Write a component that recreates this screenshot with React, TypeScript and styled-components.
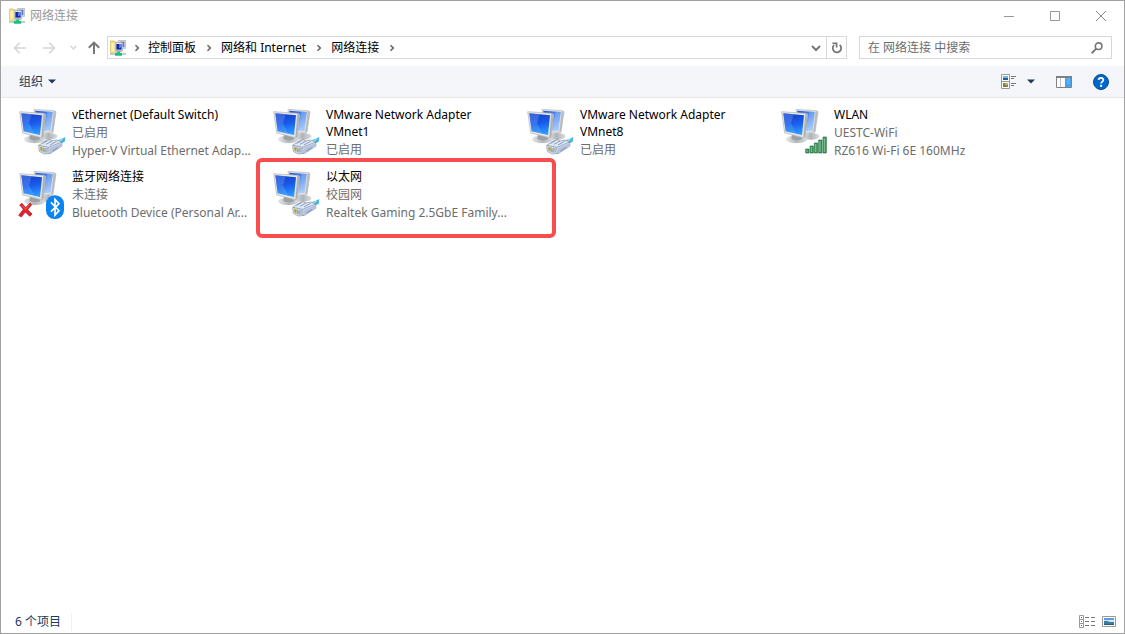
import React from "react";
import styled, { createGlobalStyle } from "styled-components";

const GlobalStyle = createGlobalStyle`
  * { box-sizing: border-box; }
  body {
    margin: 0;
    background: #fff;
    font-family: "Noto Sans", "Noto Sans CJK SC", sans-serif;
    font-size: 12px;
    line-height: 18px;
    color: #000;
  }
  button, input { font: inherit; color: inherit; }
  svg { display: block; flex: none; }
`;

const Window = styled.div`
  display: flex;
  flex-direction: column;
  min-height: 100vh;
  border: 1px solid #a0a0a0;
  background: #fff;
`;

const TitleBar = styled.header`
  display: flex;
  align-items: center;
  height: 30px;
  padding-left: 8px;
`;

const Title = styled.h1`
  flex: 1;
  margin: 0;
  padding-left: 5px;
  font-size: 12px;
  font-weight: 400;
  color: #999;
`;

const PlainButton = styled.button`
  display: flex;
  align-items: center;
  justify-content: center;
  padding: 0;
  border: 0;
  background: transparent;
`;

const CaptionButton = styled(PlainButton)`
  width: 46px;
  height: 30px;
`;

const NavBar = styled.nav`
  display: flex;
  align-items: center;
  height: 35px;
  padding: 0 12px 2px 7px;
`;

const NavButton = styled(PlainButton)<{ $width: number }>`
  width: ${(p) => p.$width}px;
  height: 24px;
`;

const AddressBar = styled.div`
  display: flex;
  flex: 1;
  align-items: center;
  height: 23px;
  padding-left: 2px;
  border: 1px solid #d9d9d9;
`;

const Crumbs = styled.ol`
  display: flex;
  flex: 1;
  align-items: center;
  margin: 0;
  padding: 0;
  list-style: none;
`;

const Crumb = styled.li`
  display: flex;
  align-items: center;
`;

const CrumbSeparator = styled.span<{ $first?: boolean }>`
  display: flex;
  justify-content: center;
  width: ${(p) => (p.$first ? 22 : 25)}px;
`;

const RefreshButton = styled(PlainButton)`
  width: 20px;
  height: 21px;
  border-left: 1px solid #d9d9d9;
`;

const SearchBox = styled.label`
  display: flex;
  align-items: center;
  width: 253px;
  height: 23px;
  margin-left: 12px;
  padding: 0 8px;
  border: 1px solid #d9d9d9;
`;

const SearchInput = styled.input`
  flex: 1;
  min-width: 0;
  padding: 0;
  border: 0;
  outline: 0;
  background: transparent;
  &::placeholder { color: #6d6d6d; opacity: 1; }
`;

const Toolbar = styled.div`
  display: flex;
  align-items: center;
  height: 32px;
  padding: 0 15px 0 18px;
  border-bottom: 1px solid #e5e7e9;
  background: #f4f6f9;
  color: #1e395b;
`;

const ToolButton = styled(PlainButton)`
  gap: 5px;
  height: 24px;
`;

const ToolGroup = styled.div`
  display: flex;
  align-items: center;
  gap: 21px;
  margin-left: auto;
`;

const ViewButton = styled(ToolButton)`
  gap: 10px;
`;

const ConnectionList = styled.ul`
  display: grid;
  flex: 1;
  grid-template-columns: repeat(auto-fill, 254px);
  grid-auto-rows: 62px;
  align-content: start;
  margin: 0;
  padding: 6px 0 0 15px;
  list-style: none;
`;

const ConnectionItem = styled.li`
  position: relative;
`;

const ConnectionButton = styled(PlainButton)`
  align-items: flex-start;
  justify-content: flex-start;
  gap: 4px;
  width: 100%;
  text-align: left;
`;

const ConnectionText = styled.span`
  display: flex;
  flex: 1;
  flex-direction: column;
  min-width: 0;
  padding: 2px 8px 0 0;
`;

const ConnectionName = styled.span`
  line-height: 17px;
`;

const ConnectionDetail = styled.span`
  overflow: hidden;
  line-height: 18px;
  color: #6d6d6d;
  text-overflow: ellipsis;
  white-space: nowrap;
`;

const ConnectionDetails = styled.span`
  display: flex;
  flex-direction: column;
  padding-top: 1px;
`;

const Highlight = styled.span`
  position: absolute;
  top: -8px;
  left: -14px;
  width: 300px;
  height: 80px;
  border: 4px solid #f94c4c;
  border-radius: 6px;
  pointer-events: none;
`;

const StatusBar = styled.footer`
  display: flex;
  align-items: center;
  justify-content: space-between;
  height: 23px;
  padding: 0 8px 0 14px;
  color: #1e395b;
`;

const ItemCount = styled.span`
  padding-right: 10px;
  border-right: 1px solid #f0f0f0;
`;

const StatusViews = styled.div`
  display: flex;
  gap: 7px;
`;

const FolderNetworkIcon = () => (
  <svg width="16" height="16" viewBox="0 0 48 48" aria-hidden="true">
    <path d="M1 3h12l3 3h8v31H1z" fill="#f2dc84" stroke="#d0b65e" strokeWidth="2" />
    <path d="M4 9h10v26H4z" fill="#fdf0aa" />
    <path d="M26 1h21v24H26z" fill="#d7dade" stroke="#a4abb1" strokeWidth="2" />
    <path d="M31 5h12v16H31z" fill="#5a76cf" />
    <path d="M16 8h22v24H16z" fill="#e8eaec" stroke="#9ba2a8" strokeWidth="2" />
    <path d="M19 12h16v17H19z" fill="#1527b4" />
    <path d="M28 12h7v10l-8 3z" fill="#6288ee" />
    <path d="M19 32h16v4H19z" fill="#aab0b5" />
    <path d="M0 39h48v6H0z" fill="#c3cccb" />
    <path d="M22 35h8v4h6v8H15v-8h7z" fill="#0fc57a" />
  </svg>
);

const Chevron = () => (
  <svg width="6" height="8" viewBox="0 0 6 8" aria-hidden="true">
    <path d="M1.5 1.2 4.3 4 1.5 6.8" fill="none" stroke="#666" strokeWidth="1.6" />
  </svg>
);

const ArrowIcon = ({ rotate, color }: { rotate: number; color: string }) => (
  <svg width="14" height="14" viewBox="0 0 14 14" aria-hidden="true">
    <path
      d="M13 7H1.8M6.8 1.8 1.6 7l5.2 5.2"
      transform={`rotate(${rotate} 7 7)`}
      fill="none"
      stroke={color}
      strokeWidth={rotate === 90 ? 2 : 1.6}
    />
  </svg>
);

const DownChevron = ({ size, color }: { size: number; color: string }) => (
  <svg width={size} height={size} viewBox="0 0 10 10" aria-hidden="true">
    <path d="m1 3 4 4 4-4" fill="none" stroke={color} strokeWidth="2" />
  </svg>
);

const DropArrow = () => (
  <svg width="8" height="5" viewBox="0 0 8 5" aria-hidden="true">
    <path d="M0 .5h8L4 4.5z" fill="#1e395b" />
  </svg>
);

const RefreshIcon = () => (
  <svg width="12" height="12" viewBox="0 0 12 12" aria-hidden="true">
    <path d="M3 3.2A4.2 4.2 0 1 0 8.6 2.9" fill="none" stroke="#777" strokeWidth="1.8" />
    <path d="M1.4 1.4h4.2v4.2" fill="none" stroke="#777" strokeWidth="1.7" />
  </svg>
);

const SearchIcon = () => (
  <svg width="12" height="12" viewBox="0 0 12 12" aria-hidden="true">
    <circle cx="7.6" cy="4.2" r="3.3" fill="none" stroke="#777" strokeWidth="1.6" />
    <path d="M5.2 6.6.6 11.2" stroke="#777" strokeWidth="2" />
  </svg>
);

const ViewIcon = () => (
  <svg width="16" height="16" viewBox="0 0 16 16" aria-hidden="true">
    <path d="M.5.5h8v14h-8zM.5 7.5h8" fill="#fff" stroke="#999" />
    <path d="M2 2h5v2H2z" fill="#73b5f2" />
    <path d="M2 4h5v2H2z" fill="#285f91" />
    <path d="M2 9h2v2H2zM5 11h2v2H5z" fill="#54a047" />
    <path d="M4 9h3v2H4z" fill="#e8a23b" />
    <path d="M2 11h3v2H2z" fill="#bf5f45" />
    <path d="M10 2.5h5M10 4.5h3M10 9.5h5M10 11.5h3" stroke="#777" />
  </svg>
);

const PreviewPaneIcon = () => (
  <svg width="16" height="12" viewBox="0 0 16 12" aria-hidden="true">
    <path d="M.5.5h15v11H.5z" fill="#fff" stroke="#808080" />
    <path d="M0 0h16v2H0z" fill="#808080" />
    <path d="M4.5 2v9" stroke="#c8c8c8" />
    <path d="M9 2h6v9H9z" fill="#45a5ee" />
    <path d="M11 3h3M11 5h3M11 7h3" stroke="#6bbcf6" />
  </svg>
);

const HelpIcon = () => (
  <svg width="16" height="16" viewBox="0 0 16 16" aria-hidden="true">
    <circle cx="8" cy="8" r="7.5" fill="#0066cc" stroke="#064b8e" />
    <path d="M5.7 5.9C5.8 3.2 10.4 3.3 10.3 6c0 1.6-2.2 1.6-2.2 3.5" fill="none" stroke="#fff" strokeWidth="1.8" />
    <path d="M7.1 10.8h2v2h-2z" fill="#fff" />
  </svg>
);

const DetailsIcon = () => (
  <svg width="16" height="13" viewBox="0 0 16 13" aria-hidden="true">
    <path d="M.5.5h4v12h-4zM.5 4.5h4M.5 8.5h4" fill="#fff" stroke="#999" />
    <path d="M2 2h1v1H2z" fill="#287d58" />
    <path d="M2 6h1v1H2z" fill="#2f8de4" />
    <path d="M2 10h1v1H2z" fill="#dd2b20" />
    <path d="M6 2.5h4M12 2.5h4M6 6.5h4M12 6.5h4M6 10.5h4M12 10.5h4" stroke="#777" />
  </svg>
);

const LargeIconsIcon = () => (
  <svg width="14" height="11" viewBox="0 0 14 11" aria-hidden="true">
    <path d="M.5.5h13v10H.5z" fill="#fff" stroke="#999" />
    <path d="M2 2h10v7H2z" fill="#5b9be6" />
    <path d="M2 4h10v2H2z" fill="#cfe6fa" />
    <path d="M2 5h3l3 1h4v3H2z" fill="#3f7c9e" />
    <path d="M2 8h10v1H2z" fill="#2b5f79" />
  </svg>
);

type Overlay = "ethernet" | "wifi" | "bluetooth";

const EthernetPlug = () => (
  <g>
    <path d="M114 116c6-6 12-8 20-10l14-7-2 14-14 7-10 8z" fill="#3fb2dc" />
    <path d="m120 113 14-7 10-4-8 9-12 7z" fill="#8fdcf2" />
    <path d="m68 124 22-14 12-3 6 4 14-3 14 5 2 13-34 22-20 2-14-8z" fill="#dde6f1" stroke="#7c8db0" strokeWidth="2" />
    <path d="m68 124 30 6 37-15M98 130l2 20" fill="none" stroke="#7c8db0" strokeWidth="2" />
    <path d="m101 132 34-14v8l-33 22z" fill="#b4c4dd" />
    <path d="m80 118 14-8M90 121l18-10M102 123l20-11M109 141l18-11" stroke="#6179a4" strokeWidth="2" />
    <path d="M74 128v11M81 129v14M88 131v15" stroke="#b5ad48" strokeWidth="3" />
    <path d="M77 130v12M84 133v12M93 132v14" stroke="#53667d" strokeWidth="2" />
  </g>
);

const WifiBars = () => (
  <g fill="#3f9a5e" stroke="#246b40" strokeWidth="2">
    {[0, 1, 2, 3, 4].map((i) => (
      <path key={i} d={`M${83 + i * 13} ${135 - i * 9}h10V147h-10z`} />
    ))}
    <path
      d="M87 138v6M100 129v15M113 120v24M126 111v33M139 102v42"
      fill="none"
      stroke="#7cc692"
      strokeWidth="3"
    />
  </g>
);

const BluetoothBadge = () => (
  <g>
    <rect x="90" y="88" width="54" height="71" rx="26" fill="#0a84f5" />
    <path d="m105 109 24 25-12 13v-47l12 13-24 24" fill="none" stroke="#fff" strokeWidth="5" />
    <path
      d="m11 117 7-5 11 13 13-14 5 5-12 15 13 13-7 7-13-13-12 15-8-5 14-18z"
      fill="#e3222b"
      stroke="#a90d18"
      strokeWidth="2"
    />
    <path d="m17 117 12 13 12-14" fill="none" stroke="#f47c7c" strokeWidth="2" />
  </g>
);

const ComputersIcon = ({ id, overlay }: { id: string; overlay: Overlay }) => (
  <svg width="52" height="54" viewBox="0 0 156 162" aria-hidden="true">
    <defs>
      <linearGradient id={`${id}-front`} x1="0.3" y1="0" x2="0.5" y2="1">
        <stop offset="0" stopColor="#1440c4" />
        <stop offset="0.5" stopColor="#1a5cec" />
        <stop offset="1" stopColor="#2f9bff" />
      </linearGradient>
      <linearGradient id={`${id}-back`} x1="0" y1="0" x2="0.5" y2="1">
        <stop offset="0" stopColor="#1d55d8" />
        <stop offset="0.55" stopColor="#5b95f2" />
        <stop offset="1" stopColor="#a5cdfb" />
      </linearGradient>
      <linearGradient id={`${id}-stand`} x1="0" y1="0" x2="1" y2="0">
        <stop offset="0" stopColor="#e6e8e9" />
        <stop offset="0.5" stopColor="#b0b4b7" />
        <stop offset="1" stopColor="#dcdfe0" />
      </linearGradient>
    </defs>
    <ellipse cx="98" cy="97" rx="27" ry="10" fill={`url(#${id}-stand)`} />
    <path d="m54 16 60 4 6 3-9 62-51 4z" fill="#dfe1e3" stroke="#b5b9bc" strokeWidth="2" />
    <path d="m113 20 7 3-9 62-5-2z" fill="#b9bdc0" />
    <path d="m58 20 52 4-7 56-43 2z" fill={`url(#${id}-back)`} />
    <path d="m94 23 16 1-7 56-15-14z" fill="#9cbdf6" opacity="0.45" />
    <ellipse cx="56" cy="106" rx="31" ry="11" fill={`url(#${id}-stand)`} stroke="#c9cccf" />
    <path d="m42 90 28 4 2 12q-15 6-32-1z" fill="#9da1a4" />
    <path d="m11 23 71 5 7 3-8 68-5 2-56-14z" fill="#e4e6e8" stroke="#b0b4b8" strokeWidth="2" />
    <path d="m82 28 7 3-8 68-5 2z" fill="#aeb2b6" />
    <path d="m16 28 62 6-6 59-49-11z" fill={`url(#${id}-front)`} />
    <path d="m16 28 31 3-8 27-18 10z" fill="#6e9cf4" opacity="0.4" />
    <path d="m21 68 18-10 16 31-32-7z" fill="#6cc0ff" opacity="0.3" />
    {overlay === "ethernet" && <EthernetPlug />}
    {overlay === "wifi" && <WifiBars />}
    {overlay === "bluetooth" && <BluetoothBadge />}
  </svg>
);

interface Connection {
  id: string;
  name: string;
  status: string;
  device?: string;
  overlay: Overlay;
  highlighted?: boolean;
}

const connections: Connection[] = [
  { id: "default-switch", name: "vEthernet (Default Switch)", status: "已启用", device: "Hyper-V Virtual Ethernet Adap...", overlay: "ethernet" },
  { id: "vmnet1", name: "VMware Network Adapter VMnet1", status: "已启用", overlay: "ethernet" },
  { id: "vmnet8", name: "VMware Network Adapter VMnet8", status: "已启用", overlay: "ethernet" },
  { id: "wlan", name: "WLAN", status: "UESTC-WiFi", device: "RZ616 Wi-Fi 6E 160MHz", overlay: "wifi" },
  { id: "bluetooth", name: "蓝牙网络连接", status: "未连接", device: "Bluetooth Device (Personal Ar...", overlay: "bluetooth" },
  { id: "ethernet", name: "以太网", status: "校园网", device: "Realtek Gaming 2.5GbE Family...", overlay: "ethernet", highlighted: true },
];

const crumbs = ["控制面板", "网络和 Internet", "网络连接"];

export default function App() {
  return (
    <>
      <GlobalStyle />
      <Window>
        <TitleBar>
          <FolderNetworkIcon />
          <Title>网络连接</Title>
          <CaptionButton aria-label="最小化">
            <svg width="10" height="10" viewBox="0 0 10 10"><path d="M0 5.5h10" stroke="#999" /></svg>
          </CaptionButton>
          <CaptionButton aria-label="最大化">
            <svg width="10" height="10" viewBox="0 0 10 10"><path d="M.5.5h9v9h-9z" fill="none" stroke="#999" /></svg>
          </CaptionButton>
          <CaptionButton aria-label="关闭">
            <svg width="10" height="10" viewBox="0 0 10 10"><path d="m0 0 10 10M10 0 0 10" stroke="#888" /></svg>
          </CaptionButton>
        </TitleBar>
        <NavBar>
          <NavButton $width={24} aria-label="后退"><ArrowIcon rotate={0} color="#d5d5d5" /></NavButton>
          <NavButton $width={34} aria-label="前进"><ArrowIcon rotate={180} color="#d5d5d5" /></NavButton>
          <NavButton $width={14} aria-label="最近浏览的位置"><DownChevron size={7} color="#d5d5d5" /></NavButton>
          <NavButton $width={27} aria-label="上移"><ArrowIcon rotate={90} color="#777" /></NavButton>
          <AddressBar>
            <FolderNetworkIcon />
            <Crumbs>
              <Crumb><CrumbSeparator $first><Chevron /></CrumbSeparator></Crumb>
              {crumbs.map((crumb) => (
                <Crumb key={crumb}>
                  <PlainButton>{crumb}</PlainButton>
                  <CrumbSeparator><Chevron /></CrumbSeparator>
                </Crumb>
              ))}
            </Crumbs>
            <NavButton $width={20} aria-label="以前的位置"><DownChevron size={10} color="#777" /></NavButton>
            <RefreshButton aria-label="刷新"><RefreshIcon /></RefreshButton>
          </AddressBar>
          <SearchBox>
            <SearchInput type="text" aria-label="搜索" placeholder="在 网络连接 中搜索" />
            <SearchIcon />
          </SearchBox>
        </NavBar>
        <Toolbar>
          <ToolButton>组织<DropArrow /></ToolButton>
          <ToolGroup>
            <ViewButton aria-label="更改视图"><ViewIcon /><DropArrow /></ViewButton>
            <ToolButton aria-label="预览窗格"><PreviewPaneIcon /></ToolButton>
            <ToolButton aria-label="帮助"><HelpIcon /></ToolButton>
          </ToolGroup>
        </Toolbar>
        <ConnectionList>
          {connections.map((c) => (
            <ConnectionItem key={c.id}>
              <ConnectionButton>
                <ComputersIcon id={c.id} overlay={c.overlay} />
                <ConnectionText>
                  <ConnectionName>{c.name}</ConnectionName>
                  <ConnectionDetails>
                    <ConnectionDetail>{c.status}</ConnectionDetail>
                    {c.device && <ConnectionDetail>{c.device}</ConnectionDetail>}
                  </ConnectionDetails>
                </ConnectionText>
              </ConnectionButton>
              {c.highlighted && <Highlight />}
            </ConnectionItem>
          ))}
        </ConnectionList>
        <StatusBar>
          <ItemCount>6 个项目</ItemCount>
          <StatusViews>
            <PlainButton aria-label="详细信息"><DetailsIcon /></PlainButton>
            <PlainButton aria-label="大图标"><LargeIconsIcon /></PlainButton>
          </StatusViews>
        </StatusBar>
      </Window>
    </>
  );
}
